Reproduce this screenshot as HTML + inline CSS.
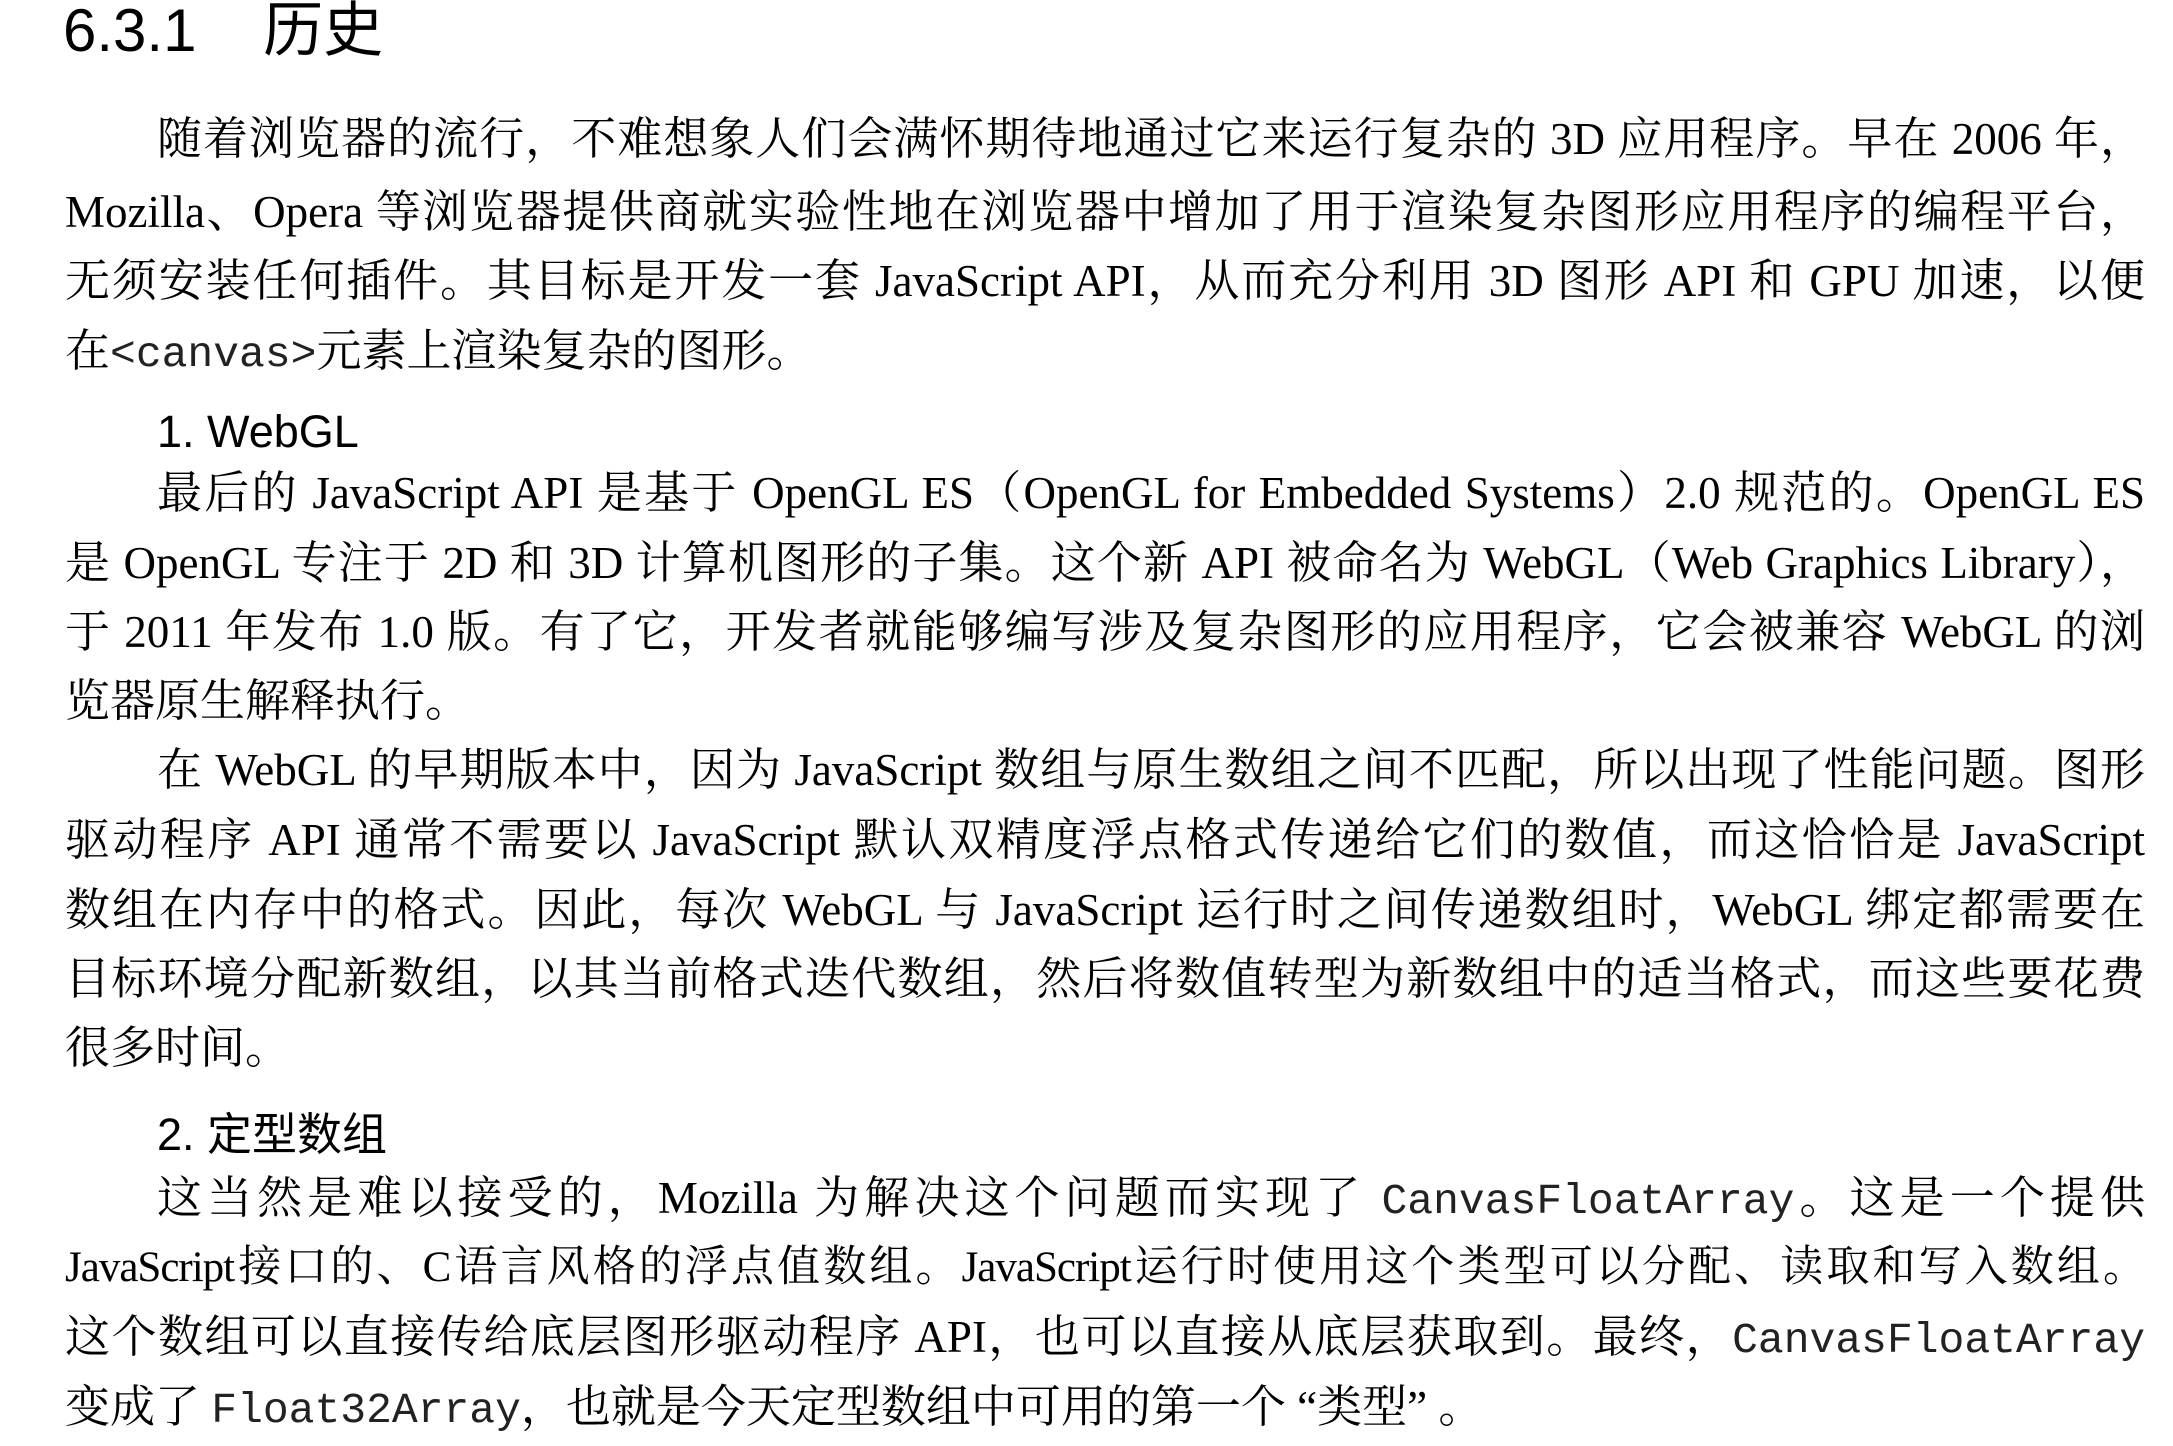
<!DOCTYPE html>
<html><head><meta charset="utf-8"><style>
html,body{margin:0;padding:0;background:#fff;}
body{width:2173px;height:1431px;position:relative;overflow:hidden;color:#000;}
.l{position:absolute;left:65px;width:2080px;height:70px;line-height:70px;font-family:"Liberation Serif","Noto Serif CJK SC",serif;font-size:45px;white-space:nowrap;}
.j{text-align:justify;text-align-last:justify;white-space:normal;overflow:hidden;}
.i{left:157px;width:1988px;}
.h{position:absolute;font-family:"Liberation Sans","Noto Sans CJK SC",sans-serif;color:#000;white-space:nowrap;}
code{font-family:"Liberation Mono",monospace;font-size:43px;color:#222;}
</style></head><body>
<div class="h" style="left:63px;top:-3px;font-size:60px;line-height:68px;">6.3.1&nbsp;&nbsp;&nbsp;&nbsp;历史</div>

<div class="l j i" style="top:104px">随着浏览器的流行，不难想象人们会满怀期待地通过它来运行复杂的 3D 应用程序。早在 2006 年，</div>
<div class="l j" style="top:177px">Mozilla、Opera 等浏览器提供商就实验性地在浏览器中增加了用于渲染复杂图形应用程序的编程平台，</div>
<div class="l j" style="top:246px">无须安装任何插件。其目标是开发一套 JavaScript API，从而充分利用 3D 图形 API 和 GPU 加速，以便</div>
<div class="l" style="top:316px">在<code>&lt;canvas&gt;</code>元素上渲染复杂的图形。</div>

<div class="h" style="left:157px;top:404px;font-size:45px;line-height:56px;">1. WebGL</div>
<div class="l j i" style="top:458px">最后的 JavaScript API 是基于 OpenGL ES（OpenGL for Embedded Systems）2.0 规范的。OpenGL ES</div>
<div class="l j" style="top:528px">是 OpenGL 专注于 2D 和 3D 计算机图形的子集。这个新 API 被命名为 WebGL（Web Graphics Library），</div>
<div class="l j" style="top:597px">于 2011 年发布 1.0 版。有了它，开发者就能够编写涉及复杂图形的应用程序，它会被兼容 WebGL 的浏</div>
<div class="l" style="top:666px">览器原生解释执行。</div>

<div class="l j i" style="top:735px">在 WebGL 的早期版本中，因为 JavaScript 数组与原生数组之间不匹配，所以出现了性能问题。图形</div>
<div class="l j" style="top:805px">驱动程序 API 通常不需要以 JavaScript 默认双精度浮点格式传递给它们的数值，而这恰恰是 JavaScript</div>
<div class="l j" style="top:875px">数组在内存中的格式。因此，每次 WebGL 与 JavaScript 运行时之间传递数组时，WebGL 绑定都需要在</div>
<div class="l j" style="top:944px">目标环境分配新数组，以其当前格式迭代数组，然后将数值转型为新数组中的适当格式，而这些要花费</div>
<div class="l" style="top:1013px">很多时间。</div>

<div class="h" style="left:157px;top:1107px;font-size:45px;line-height:56px;">2. 定型数组</div>
<div class="l j i" style="top:1163px">这当然是难以接受的，Mozilla 为解决这个问题而实现了 <code>CanvasFloatArray</code>。这是一个提供</div>
<div class="l j" style="top:1233px;font-size:43px;letter-spacing:-1px">JavaScript接口的、C语言风格的浮点值数组。JavaScript运行时使用这个类型可以分配、读取和写入数组。</div>
<div class="l j" style="top:1302px">这个数组可以直接传给底层图形驱动程序 API，也可以直接从底层获取到。最终，<code>CanvasFloatArray</code></div>
<div class="l" style="top:1372px">变成了 <code>Float32Array</code>，也就是今天定型数组中可用的第一个 “类型” 。</div>
</body></html>
